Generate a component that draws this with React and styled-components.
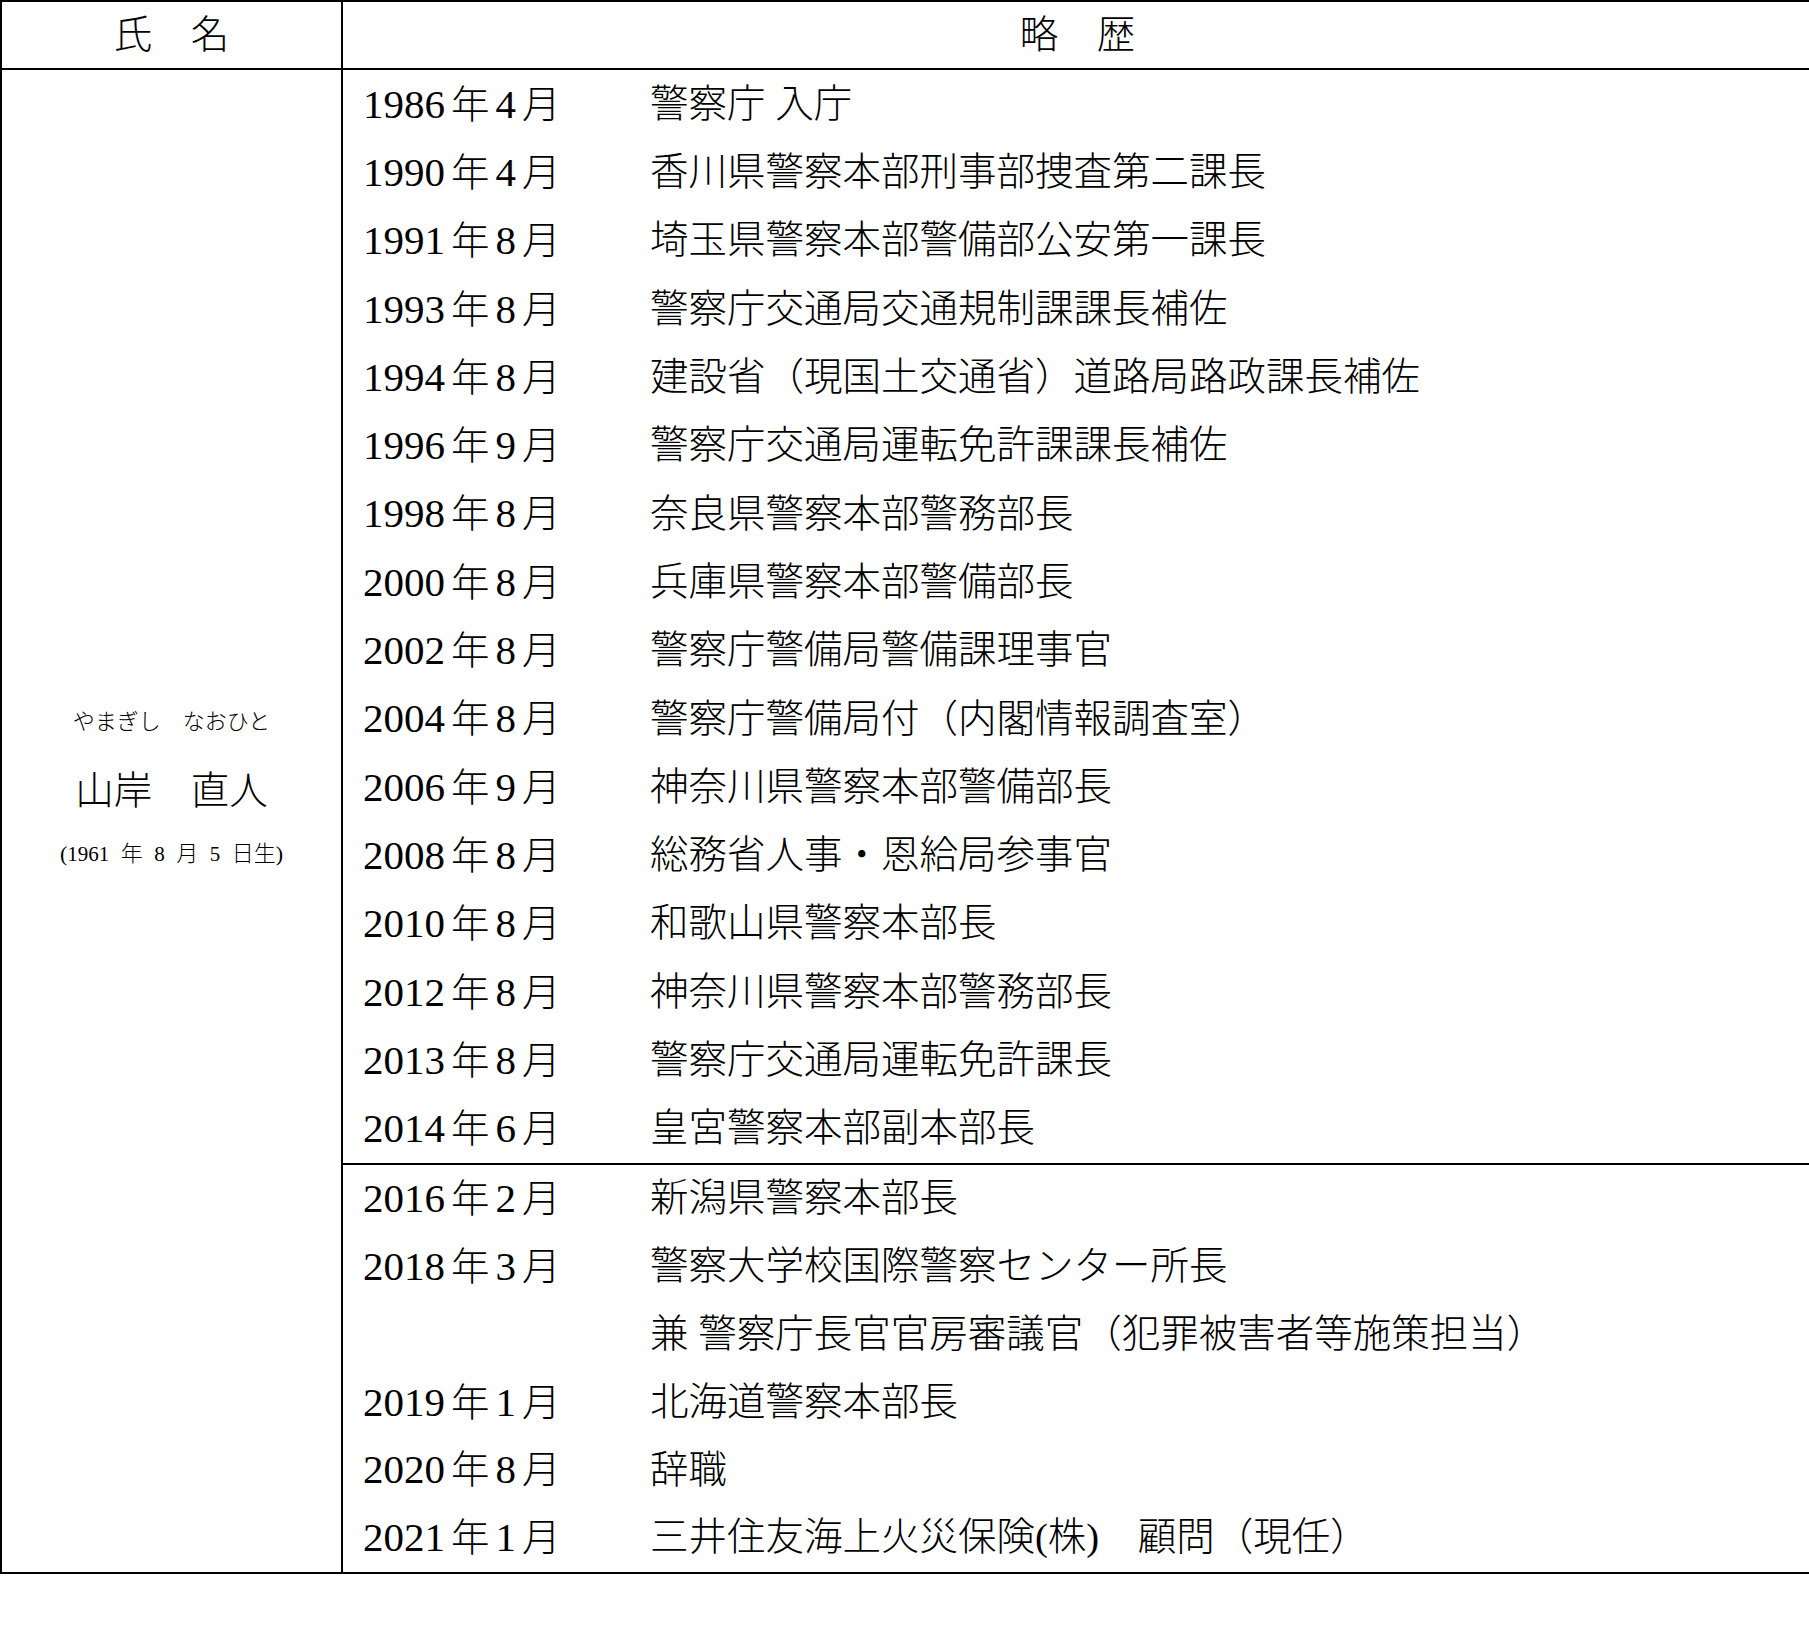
import styled, { createGlobalStyle } from 'styled-components';

const GlobalStyle = createGlobalStyle`
	html,
	body {
		margin: 0;
		padding: 0;
		background: #fff;
		overflow: hidden;
	}

	body {
		font-family: 'Liberation Serif', 'Noto Sans CJK JP', serif;
		color: #000;
	}

	* {
		box-sizing: border-box;
	}
`;

const career = [
	[
		['1986', '4', '警察庁 入庁'],
		['1990', '4', '香川県警察本部刑事部捜査第二課長'],
		['1991', '8', '埼玉県警察本部警備部公安第一課長'],
		['1993', '8', '警察庁交通局交通規制課課長補佐'],
		['1994', '8', '建設省（現国土交通省）道路局路政課長補佐'],
		['1996', '9', '警察庁交通局運転免許課課長補佐'],
		['1998', '8', '奈良県警察本部警務部長'],
		['2000', '8', '兵庫県警察本部警備部長'],
		['2002', '8', '警察庁警備局警備課理事官'],
		['2004', '8', '警察庁警備局付（内閣情報調査室）'],
		['2006', '9', '神奈川県警察本部警備部長'],
		['2008', '8', '総務省人事・恩給局参事官'],
		['2010', '8', '和歌山県警察本部長'],
		['2012', '8', '神奈川県警察本部警務部長'],
		['2013', '8', '警察庁交通局運転免許課長'],
		['2014', '6', '皇宮警察本部副本部長'],
	],
	[
		['2016', '2', '新潟県警察本部長'],
		['2018', '3', '警察大学校国際警察センター所長'],
		[null, null, '兼 警察庁長官官房審議官（犯罪被害者等施策担当）'],
		['2019', '1', '北海道警察本部長'],
		['2020', '8', '辞職'],
		['2021', '1', '三井住友海上火災保険(株)　顧問（現任）'],
	],
];

// 1ブロック目と2ブロック目で行の高さが少し違う
const rowHeights = [68.3, 67.8];

export default function App() {
	return (
		<>
			<GlobalStyle />
			<Sheet>
				<HeadCell>氏　名</HeadCell>
				<HeadCell $divider>略　歴</HeadCell>

				<NameCell>
					<Kana>やまぎし　なおひと</Kana>
					<FullName>山岸　直人</FullName>
					<Birth>
						(<Small>1961</Small> 年 <Small>8</Small> 月 <Small>5</Small> 日生)
					</Birth>
				</NameCell>

				<History>
					{career.map((block, i) => (
						<Block key={i} $rowHeight={rowHeights[i]}>
							{block.map(([year, month, text], j) => (
								<Row key={j}>
									<When>
										{year && (
											<>
												<Year>{year}</Year>年<Month>{month}</Month>月
											</>
										)}
									</When>
									<What>{text}</What>
								</Row>
							))}
						</Block>
					))}
				</History>
			</Sheet>
		</>
	);
}

const Sheet = styled.main`
	display: grid;
	grid-template-columns: 339px 1fr;
	width: 1812px;
	border: 2px solid #000;
	border-right: none;
`;

const HeadCell = styled.div`
	height: 68px;
	display: flex;
	align-items: center;
	justify-content: center;
	border-bottom: 2px solid #000;
	border-left: ${(p) => (p.$divider ? '2px solid #000' : 'none')};
	font-size: 38.5px;
	font-weight: 300;
	line-height: 1;
`;

const NameCell = styled.section`
	display: flex;
	flex-direction: column;
	align-items: center;
	padding-top: 637px;
	font-weight: 300;
	white-space: nowrap;
`;

const Kana = styled.div`
	font-size: 22px;
	line-height: 30px;
`;

const FullName = styled.div`
	margin-top: 31px;
	font-size: 38.5px;
	line-height: 46px;
`;

const Birth = styled.div`
	margin-top: 25px;
	font-size: 22px;
	line-height: 30px;
	word-spacing: 6px;
`;

const Small = styled.span`
	font-size: 21px;
`;

const History = styled.section`
	border-left: 2px solid #000;
`;

const Block = styled.div`
	display: grid;
	grid-auto-rows: ${(p) => p.$rowHeight}px;
	padding-left: 20px;

	& + & {
		border-top: 2px solid #000;
	}
`;

const Row = styled.div`
	display: grid;
	grid-template-columns: 287px 1fr;
	align-items: center;
	font-size: 38.5px;
	font-weight: 300;
	line-height: 1;
	white-space: nowrap;
`;

const When = styled.span``;

const Year = styled.span`
	font-size: 41px;
	margin-right: 6px;
`;

const Month = styled.span`
	font-size: 41px;
	margin: 0 6px;
`;

const What = styled.span``;
